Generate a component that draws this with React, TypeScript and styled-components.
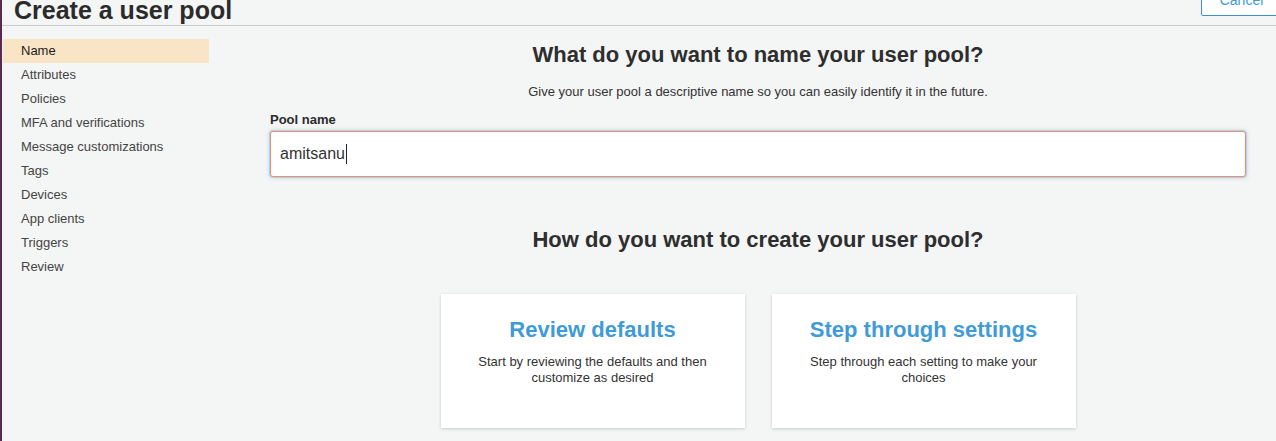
import styled, { createGlobalStyle } from "styled-components"

const GlobalStyle = createGlobalStyle`
  html, body {
    margin: 0;
    padding: 0;
    background: #f4f5f5;
    overflow: hidden;
  }
  * {
    box-sizing: border-box;
  }
`

const STEPS = [
  "Name",
  "Attributes",
  "Policies",
  "MFA and verifications",
  "Message customizations",
  "Tags",
  "Devices",
  "App clients",
  "Triggers",
  "Review"
]

const OPTIONS = [
  {
    title: "Review defaults",
    text: "Start by reviewing the defaults and then customize as desired"
  },
  {
    title: "Step through settings",
    text: "Step through each setting to make your choices"
  }
]

export default function App() {
  return (
    <>
      <GlobalStyle />
      <Page>
        <Header>
          <Title>Create a user pool</Title>
          <CancelButton>Cancel</CancelButton>
        </Header>
        <Body>
          <Sidebar>
            {STEPS.map((step, i) => (
              <StepItem key={step} active={i === 0}>
                {step}
              </StepItem>
            ))}
          </Sidebar>
          <Main>
            <Heading>What do you want to name your user pool?</Heading>
            <SubText>Give your user pool a descriptive name so you can easily identify it in the future.</SubText>
            <Field>
              <Label>Pool name</Label>
              <FakeInput>
                amitsanu
                <Caret />
              </FakeInput>
            </Field>
            <Heading second>How do you want to create your user pool?</Heading>
            <CardRow>
              {OPTIONS.map((opt) => (
                <Card key={opt.title}>
                  <CardTitle>{opt.title}</CardTitle>
                  <CardText>{opt.text}</CardText>
                </Card>
              ))}
            </CardRow>
          </Main>
        </Body>
      </Page>
    </>
  )
}

const Page = styled.div`
  display: flex;
  flex-direction: column;
  width: 1276px;
  height: 441px;
  border-left: 2px solid #5e2750;
  font-family: "Liberation Sans", Arial, sans-serif;
  color: #333;
  overflow: hidden;
`

const Header = styled.div`
  display: flex;
  flex-direction: row;
  justify-content: space-between;
  align-items: flex-start;
  height: 26px;
  border-bottom: 1px solid #cccccc;
  padding-left: 12px;
`

const Title = styled.h1`
  margin: -2px 0 0 0;
  font-size: 25px;
  line-height: 25px;
  font-weight: bold;
  color: #2b2b2b;
`

const CancelButton = styled.button`
  margin: -17px -6px 0 0;
  width: 81px;
  height: 33px;
  background: #fff;
  border: 1px solid #3f8fd2;
  border-radius: 2px;
  color: #3f9bd8;
  font-family: "Liberation Sans", Arial, sans-serif;
  font-size: 14px;
`

const Body = styled.div`
  display: flex;
  flex-direction: row;
  flex: 1;
`

const Sidebar = styled.div`
  display: flex;
  flex-direction: column;
  width: 206px;
  margin-left: 1px;
  padding-top: 13px;
`

const StepItem = styled.div<{ active?: boolean }>`
  height: 24px;
  line-height: 24px;
  padding-left: 18px;
  font-size: 13px;
  color: ${(p) => (p.active ? "#1a1a1a" : "#444")};
  background: ${(p) => (p.active ? "#f9e4c6" : "transparent")};
`

const Main = styled.div`
  display: flex;
  flex-direction: column;
  align-items: center;
  flex: 1;
  padding: 17px 30px 0 61px;
`

const Heading = styled.h2<{ second?: boolean }>`
  margin: ${(p) => (p.second ? "51px 0 0 0" : "0")};
  font-size: 22px;
  line-height: 24px;
  font-weight: bold;
  color: #2e2e2e;
`

const SubText = styled.p`
  margin: 17px 0 0 0;
  font-size: 13px;
  line-height: 16px;
  color: #333;
`

const Field = styled.div`
  display: flex;
  flex-direction: column;
  align-self: stretch;
  margin-top: 12px;
  gap: 3px;
`

const Label = styled.label`
  font-size: 13px;
  line-height: 16px;
  font-weight: bold;
  color: #2b2b2b;
`

const FakeInput = styled.div`
  display: flex;
  align-items: center;
  height: 46px;
  padding: 0 9px;
  background: #fff;
  border: 1px solid #ec9169;
  border-radius: 3px;
  box-shadow: 0 0 0 1px rgba(120, 175, 225, 0.35), 0 0 4px rgba(90, 155, 220, 0.55);
  font-size: 16px;
  color: #333;
`

const Caret = styled.span`
  display: inline-block;
  width: 1px;
  height: 20px;
  margin-left: 1px;
  background: #222;
`

const CardRow = styled.div`
  display: flex;
  flex-direction: row;
  gap: 27px;
  margin-top: 42px;
`

const Card = styled.div`
  display: flex;
  flex-direction: column;
  align-items: center;
  width: 304px;
  height: 134px;
  padding: 23px 30px 0;
  background: #fff;
  box-shadow: 0 1px 3px rgba(0, 0, 0, 0.18);
  text-align: center;
`

const CardTitle = styled.div`
  font-size: 22px;
  line-height: 26px;
  font-weight: bold;
  color: #3f9bd8;
`

const CardText = styled.div`
  margin-top: 11px;
  font-size: 13px;
  line-height: 16px;
  color: #333;
`
